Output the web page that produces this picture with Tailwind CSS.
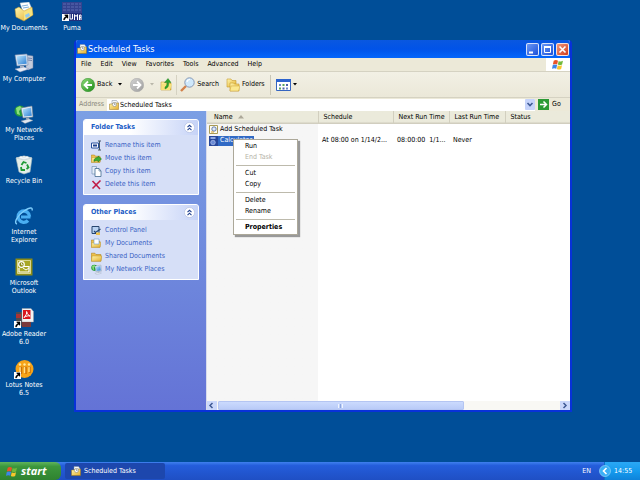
<!DOCTYPE html>
<html lang="en">

<head>
    <title>Scheduled Tasks</title>
    <meta charset="utf-8">
    <meta name="viewport" content="width=device-width, initial-scale=1.0">
    <script src="https://cdn.jsdelivr.net/npm/@tailwindcss/browser@4"></script>
</head>

<body class="h-screen flex flex-col overflow-hidden bg-[#004e98] font-['DejaVu_Sans_Condensed','DejaVu_Sans',sans-serif] text-[7px] leading-[9px] text-black">

    <!-- shared icons -->
    <svg class="absolute size-0">
        <defs>
            <linearGradient id="green" x1="0" y1="0" x2="1" y2="1">
                <stop offset="0" stop-color="#8fdc78"/><stop offset="1" stop-color="#1b8a17"/>
            </linearGradient>
            <linearGradient id="grey" x1="0" y1="0" x2="1" y2="1">
                <stop offset="0" stop-color="#d4d4d4"/><stop offset="1" stop-color="#9c9c9c"/>
            </linearGradient>
            <linearGradient id="screen" x1="0" y1="0" x2="1" y2="1">
                <stop offset="0" stop-color="#bfe8ff"/><stop offset="1" stop-color="#2b7fd4"/>
            </linearGradient>
            <linearGradient id="yellow" x1="0" y1="0" x2="1" y2="1">
                <stop offset="0" stop-color="#fff6b0"/><stop offset="1" stop-color="#e3ae2c"/>
            </linearGradient>
            <symbol id="tasks" viewBox="0 0 10 10">
                <path d="M3 .5h4.500l1.500 2v4H3z" fill="#f4f7fb" stroke="#7b8794" stroke-width=".5"/>
                <path d="M.5 4h2.500l1-1h5.500v6.500H.5z" fill="url(#yellow)" stroke="#9a741a" stroke-width=".5"/>
                <circle cx="5.500" cy="4.500" r="2" fill="#fff" stroke="#777" stroke-width=".5"/>
                <path d="M5.500 3.200v1.300h1" fill="none" stroke="#345" stroke-width=".5"/>
            </symbol>
            <symbol id="folder" viewBox="0 0 10 10">
                <path d="M.3 2h3.200l1 1.200H9v6H.3z" fill="#eec14c" stroke="#a97b15" stroke-width=".5"/>
                <path d="M1 4.500h8.800L9 9.300H.3z" fill="url(#yellow)" stroke="#b98c20" stroke-width=".4"/>
            </symbol>
            <symbol id="network" viewBox="0 0 20 20">
                <circle cx="6" cy="7" r="5.500" fill="#249b3c"/>
                <path d="M2 4l4-2 2 2-3 3 1 4-3-1z" fill="#8be07a"/>
                <path d="M7 4l11-2 1 11-10 1z" fill="#e6edf5" stroke="#66788c" stroke-width=".6"/>
                <path d="M8.500 5.200L17 3.500l.8 8.300-7.800.8z" fill="url(#screen)"/>
                <path d="M12 14l3-.4.500 2.400-3 .5z" fill="#9babbd"/>
                <path d="M7 17l8-2 4 1.500-8 3z" fill="#dfe7ef" stroke="#7b8da0" stroke-width=".4"/>
            </symbol>
            <symbol id="flag" viewBox="0 0 14 12">
                <path d="M2 1.500C4 .3 5.500.6 7 1.500L6 6C4.500 5.200 3 5.100 1 6z" fill="#ea5427"/>
                <path d="M7.800 1.800c1.700.9 3.200.8 5-.1l-1 4.400c-1.800.9-3.400.9-5 0z" fill="#72b93b"/>
                <path d="M.9 6.700c1.900-.9 3.500-.8 5 0L5 11C3.500 10.200 2 10.100 0 11z" fill="#3d86e8"/>
                <path d="M6.700 7c1.600.9 3.100.9 5 0l-1 4.300c-1.800.8-3.400.8-5 0z" fill="#f9c62c"/>
            </symbol>
            <symbol id="shortcut" viewBox="0 0 7 7">
                <path d="M0 0h7v7H0z" fill="#fff"/>
                <path d="M1.500 6C1.500 4 2.500 3 4 2.800L2.700 1.300V.8H6v3.400h-.6L4.600 3.400C4 3.700 3 4.300 2.600 6z" stroke="#000" stroke-width=".3"/>
            </symbol>
            <symbol id="chevrons" viewBox="0 0 10 10">
                <circle cx="5" cy="5" r="4.600" fill="#fff" stroke="#b3bfe0" stroke-width=".6"/>
                <path d="M3.200 4.700L5 3l1.800 1.700M3.200 7.300L5 5.600l1.800 1.700" fill="none" stroke="#1e3f8f" stroke-width="1"/>
            </symbol>
        </defs>
    </svg>

    <main class="relative flex-1 min-h-0">

        <!-- desktop icons -->
        <nav class="flex text-center text-white leading-[8px]">
            <div class="w-12">
                <a href="#" class="flex flex-col items-center h-[51px] pt-[2px] gap-[2px]">
                    <svg class="size-5 shrink-0" viewBox="0 0 20 20">
                        <path d="M6 1l9-1 3 7-8 6z" fill="#fff" stroke="#9db4c9" stroke-width=".5"/>
                        <path d="M8 4l6-1M9 6l6-1" stroke="#7fb0dd"/>
                        <path d="M1 7l4-2 5 4 8-4 1 8-9 6-8-4z" fill="url(#yellow)" stroke="#c69a2c" stroke-width=".5"/>
                        <path d="M10 10l8-4 .5 7L10 18z" fill="#f8e37f"/>
                        <path d="M11 13l4-2 1 3-4 2z" fill="#8ec9f2"/>
                    </svg>
                    <span class="whitespace-nowrap">My Documents</span>
                </a>
                <a href="#" class="flex flex-col items-center h-[51px] pt-[2px] gap-[2px]">
                    <svg class="size-5 shrink-0" viewBox="0 0 20 20">
                        <path d="M12 2l7 1v12l-5 2-2-2z" fill="#c3cbdc" stroke="#6e7d9c" stroke-width=".5"/>
                        <path d="M14 5l4 .5M14 7l4 .5" stroke="#7384ab"/>
                        <path d="M1 2l12-1 1 11-11 1z" fill="#dfe8f6" stroke="#7186a6" stroke-width=".6"/>
                        <path d="M2.500 3.300l9.500-.8.700 8.300-8.700.8z" fill="url(#screen)"/>
                        <path d="M6 13h4v2H6z" fill="#a7b3c8"/>
                        <path d="M1 16l9-2 5 2-9 3z" fill="#e8edf7" stroke="#8493b5" stroke-width=".5"/>
                    </svg>
                    <span class="whitespace-nowrap">My Computer</span>
                </a>
                <a href="#" class="flex flex-col items-center h-[51px] pt-[2px] gap-[2px]">
                    <svg class="size-5 shrink-0"><use href="#network"/></svg>
                    <span>My Network<br>Places</span>
                </a>
                <a href="#" class="flex flex-col items-center h-[51px] pt-[2px] gap-[2px]">
                    <svg class="size-5 shrink-0" viewBox="0 0 20 20">
                        <path d="M2 3l8-2 8 2-2 14-6 2-5-2z" fill="#e4eee9" stroke="#a8bcc0" stroke-width=".6"/>
                        <path d="M2 3l8 2 8-2-8-2z" fill="#fff" stroke="#b3c4ca" stroke-width=".5"/>
                        <path d="M4 3l3-2 3 2 3-2 3 2-6 1.500z" fill="#f5fafd" stroke="#9aa" stroke-width=".3"/>
                        <path d="M7.500 10l2-3 3 1M13 9.500l1.500 3-2 1.500M11 15H7.500l-.5-3" fill="none" stroke="#1f9a35" stroke-width="1.800"/>
                    </svg>
                    <span class="whitespace-nowrap">Recycle Bin</span>
                </a>
                <a href="#" class="flex flex-col items-center h-[51px] pt-[2px] gap-[2px]">
                    <svg class="size-5 shrink-0" viewBox="0 0 20 20">
                        <path d="M16.500 11H7" stroke="#49aef2" stroke-width="3"/>
                        <path d="M15.500 10.500a5.700 5.700 0 1 0-1.500 4" fill="none" stroke="#49aef2" stroke-width="3.400"/>
                        <path d="M3 18C-1 17 4 9 10 5s9-4 8-.5" fill="none" stroke="#7fcdfb" stroke-width="1.400"/>
                    </svg>
                    <span>Internet<br>Explorer</span>
                </a>
                <a href="#" class="flex flex-col items-center h-[51px] pt-[2px] gap-[2px]">
                    <svg class="size-5 shrink-0" viewBox="0 0 20 20">
                        <path d="M1.500 1.500h17v17h-17z" fill="#8d8c16"/>
                        <path d="M3.500 3.500h13v13h-13z" fill="#a9a726" stroke="#e9e7b0" stroke-width=".8"/>
                        <path d="M8 9.500h7v5.500H5v-4" fill="#a9a726" stroke="#fff" stroke-width="1.200"/>
                        <path d="M9 11l3 2 3-2" fill="none" stroke="#fff"/>
                        <circle cx="7.500" cy="7.500" r="2.800" fill="#8d8c16" stroke="#fff" stroke-width="1.200"/>
                        <path d="M7.500 5.800v2h1.500" fill="none" stroke="#fff" stroke-width=".8"/>
                    </svg>
                    <span>Microsoft<br>Outlook</span>
                </a>
                <a href="#" class="flex flex-col items-center h-[51px] pt-[2px] gap-[2px]">
                    <svg class="size-5 shrink-0" viewBox="0 0 20 20">
                        <path d="M2 4h7v14H2z" fill="#4b4b52"/>
                        <path d="M2 6h5v4H2z" fill="#a33"/>
                        <path d="M8 .5h9l2.500 3V14H8z" fill="#f2f2f2" stroke="#999" stroke-width=".4"/>
                        <path d="M9 2h7.500v9H9z" fill="#d9141c"/>
                        <path d="M10 9.500c2-2 3-4 2.600-6 1 3 2 4 3.500 4.500-2-.5-4 0-6 1.500z" fill="none" stroke="#fff" stroke-width="1"/>
                        <path d="M8 14h9v5H8z" fill="#7a3a3c"/>
                        <use href="#shortcut" x="0" y="13" width="7" height="7"/>
                    </svg>
                    <span class="whitespace-nowrap">Adobe Reader<br>6.0</span>
                </a>
                <a href="#" class="flex flex-col items-center h-[51px] pt-[2px] gap-[2px]">
                    <svg class="size-5 shrink-0" viewBox="0 0 20 20">
                        <circle cx="10.500" cy="10" r="9" fill="#f6a318"/>
                        <path d="M5 8.500h2.500v6.500M9.500 8.500h2.500v6.500M14 8.500h2V14" fill="none" stroke="#c96e08" stroke-width="1.400"/>
                        <path d="M6 8v6M10.500 8v6M15 8v5" stroke="#ffe08a" stroke-width="1.400"/>
                        <circle cx="6" cy="5.500" r="1.200" fill="#ffe9a0"/><circle cx="10.500" cy="5.500" r="1.200" fill="#ffe9a0"/><circle cx="15" cy="5.500" r="1.200" fill="#ffe9a0"/>
                        <use href="#shortcut" x="0" y="13" width="7" height="7"/>
                    </svg>
                    <span>Lotus Notes<br>6.5</span>
                </a>
            </div>
            <div class="w-12">
                <a href="#" class="flex flex-col items-center h-[51px] pt-[2px] gap-[2px]">
                    <svg class="size-5 shrink-0" viewBox="0 0 20 20">
                        <path d="M0 0h20v11H0z" fill="#34438f"/>
                        <path d="M1 2h18M1 5h18M1 8h18" stroke="#5c6cb2" stroke-width="1" stroke-dasharray="3 1"/>
                        <path d="M0 11h20v8H0z" fill="#22307c"/>
                        <path d="M8 12v5h2.500v-5M12.500 18v-5.500l1.500 2 1.500-2V18M17.500 18v-5h1.500v5M17.500 15.500H19" fill="none" stroke="#fff" stroke-width="1"/>
                        <use href="#shortcut" x="0" y="12" width="7" height="7"/>
                    </svg>
                    <span>Puma</span>
                </a>
            </div>
        </nav>

        <!-- explorer window -->
        <section class="absolute left-[74px] right-[68px] top-10 bottom-[50px] flex flex-col rounded-t-[4px] overflow-hidden border-x-2 border-b-2 border-[#0831d9] bg-[#ece9d8]">
            <header class="flex items-center h-[18px] shrink-0 px-px gap-px bg-linear-to-b from-[#0a58e0] via-[#0153e8] to-[#0466fb] text-white">
                <svg class="size-[10px]"><use href="#tasks"/></svg>
                <h1 class="flex-1 text-[9px] leading-[12px]">Scheduled Tasks</h1>
                <div class="flex gap-[2px]">
                    <button aria-label="Minimize" class="size-[13px] rounded-[2px] border border-white/80 bg-linear-to-br from-[#6a97f5] to-[#1d4fd8]">
                        <svg viewBox="0 0 11 11"><path d="M2 8.500h4" stroke="#fff" stroke-width="2"/></svg>
                    </button>
                    <button aria-label="Maximize" class="size-[13px] rounded-[2px] border border-white/80 bg-linear-to-br from-[#6a97f5] to-[#1d4fd8]">
                        <svg viewBox="0 0 11 11"><path d="M2.500 3v5.500h6V3" fill="none" stroke="#fff" stroke-width="1"/><path d="M2 3h7" stroke="#fff" stroke-width="2"/></svg>
                    </button>
                    <button aria-label="Close" class="size-[13px] rounded-[2px] border border-white/80 bg-linear-to-br from-[#f0957a] to-[#cf3a14]">
                        <svg viewBox="0 0 11 11"><path d="M2.500 2.500l6 6M8.500 2.500l-6 6" stroke="#fff" stroke-width="1.600"/></svg>
                    </button>
                </div>
            </header>

            <div class="flex h-[14px] shrink-0 border-b border-[#d5d2c2]">
                <div class="flex flex-1 items-center gap-[9px] pl-[5px]">
                    <button>File</button>
                    <button>Edit</button>
                    <button>View</button>
                    <button>Favorites</button>
                    <button>Tools</button>
                    <button>Advanced</button>
                    <button>Help</button>
                </div>
                <div class="flex w-6 items-center justify-center bg-white">
                    <svg class="w-3 h-[11px]"><use href="#flag"/></svg>
                </div>
            </div>

            <div class="flex items-center h-[26px] shrink-0 pl-[5px] border-b border-[#d5d2c2] bg-linear-to-b from-[#f2f0e5] to-[#ebe8d8]">
                <button class="flex items-center gap-[2px]">
                    <svg class="size-[14px]" viewBox="0 0 14 14"><circle cx="7" cy="7" r="6.700" fill="url(#green)" stroke="#2c8a28" stroke-width=".5"/><path d="M11 7H4M7 3.500L3.500 7 7 10.500" fill="none" stroke="#fff" stroke-width="1.800"/></svg>
                    Back
                </button>
                <button aria-label="Back history" class="w-4"><svg class="mx-auto w-1 h-[3px]" viewBox="0 0 4 3"><path d="M0 0h4L2 2.500z"/></svg></button>
                <button aria-label="Forward" class="ml-[2px]">
                    <svg class="size-[14px]" viewBox="0 0 14 14"><circle cx="7" cy="7" r="6.700" fill="url(#grey)" stroke="#a5a5a5" stroke-width=".5"/><path d="M3 7h7M7 3.500L10.500 7 7 10.500" fill="none" stroke="#fff" stroke-width="1.800"/></svg>
                </button>
                <button aria-label="Forward history" class="w-4"><svg class="mx-auto w-1 h-[3px]" viewBox="0 0 4 3"><path d="M0 0h4L2 2.500z" fill="#b9b7aa"/></svg></button>
                <button aria-label="Up">
                    <svg class="size-[13px]" viewBox="0 0 13 13"><path d="M1 4h4l1 1h5v7H1z" fill="url(#yellow)" stroke="#b98c20" stroke-width=".5"/><path d="M2 6h10l-2 6H1z" fill="#f6e27c"/><path d="M5 11c3-1 4-3 3.500-6.500H11L8 .5 4.500 4.500H7C7 7 6.500 8 5 9z" fill="#2fa52c" stroke="#17761a" stroke-width=".4"/></svg>
                </button>
                <span class="h-5 w-px mx-[3px] bg-[#d5d2c2]"></span>
                <button class="flex items-center gap-[2px]">
                    <svg class="size-[15px]" viewBox="0 0 15 15"><path d="M1 14l5-5" stroke="#d2814b" stroke-width="2.400"/><circle cx="9.500" cy="5.500" r="4.700" fill="#cfe8fb" stroke="#8698b5" stroke-width="1"/><path d="M7 5a3 3 0 0 1 3-2.500" fill="none" stroke="#fff" stroke-width="1.200"/></svg>
                    Search
                </button>
                <button class="flex items-center gap-[2px] ml-[7px]">
                    <svg class="size-[14px]" viewBox="0 0 14 14"><path d="M1 1h4l1 1.500h4V9H1z" fill="url(#yellow)" stroke="#c89b2e" stroke-width=".6"/><path d="M4 5h3.500l1 1H13v7H4z" fill="url(#yellow)" stroke="#c89b2e" stroke-width=".6"/><path d="M5 8h9l-1.500 5H4z" fill="#fbe88e" stroke="#c89b2e" stroke-width=".4"/></svg>
                    Folders
                </button>
                <span class="h-5 w-px mx-[5px] bg-[#c9c6b6]"></span>
                <button aria-label="Views" class="flex items-center gap-[2px]">
                    <svg class="w-[15px] h-3" viewBox="0 0 15 12"><path d="M.5.5h14v11H.5z" fill="#fff" stroke="#3565c0"/><path d="M0 0h15v3H0z" fill="#2c63cd"/><path d="M3 5h2v2H3zM10 8.500h2v2h-2z" fill="#6f8ac7"/><path d="M6.500 5h2v2h-2zM3 8.500h2v2H3z" fill="#56a55a"/><path d="M10 5h2v2h-2zM6.500 8.500h2v2h-2z" fill="#4b62a8"/></svg>
                    <svg class="w-1 h-[3px]" viewBox="0 0 4 3"><path d="M0 0h4L2 2.500z"/></svg>
                </button>
            </div>

            <form class="flex items-center h-[13px] shrink-0 pl-[3px] gap-[3px]">
                <label for="address" class="w-[25px] text-[#8a887b]">Address</label>
                <div class="flex flex-1 items-center h-3 pl-[2px] gap-px bg-white">
                    <svg class="size-[10px]"><use href="#tasks"/></svg>
                    <input id="address" type="text" value="Scheduled Tasks" class="flex-1 min-w-0 h-3 outline-none">
                    <button type="button" aria-label="Show addresses" class="w-[10px] h-[11px] rounded-[1px] bg-[#c6d4fb]">
                        <svg viewBox="0 0 10 11"><path d="M2.500 4L5 6.500 7.500 4" fill="none" stroke="#3f5a95" stroke-width="1.600"/></svg>
                    </button>
                </div>
                <button type="button" class="flex items-center w-8 gap-[3px]">
                    <svg class="size-[11px]" viewBox="0 0 11 11"><path d="M0 0h11v11H0z" fill="#2c9a35"/><path d="M2 5.500h6M5.500 2.500l3 3-3 3" fill="none" stroke="#fff" stroke-width="1.500"/></svg>
                    Go
                </button>
            </form>

            <div class="flex flex-1 min-h-0">
                <aside class="w-[130px] shrink-0 px-[7px] pt-2 flex flex-col gap-[9px] bg-linear-to-b from-[#7b9fe4] to-[#6473d6] text-[#3a5fc4]">
                    <section class="rounded-t-[3px] border border-white bg-[#d6dff7] overflow-hidden">
                        <div class="flex items-center justify-between h-[15px] pl-[7px] pr-[3px] bg-linear-to-r from-white from-40% to-[#c6d3f7]">
                            <h2 class="font-bold text-[#215dc6]">Folder Tasks</h2>
                            <button aria-label="Collapse Folder Tasks"><svg class="size-[11px]"><use href="#chevrons"/></svg></button>
                        </div>
                        <ul class="pl-[7px] pt-[5px] pb-[2px]">
                            <li class="h-[13px]"><a href="#" class="flex items-center gap-[3px]">
                                <svg class="size-[11px]" viewBox="0 0 11 11"><path d="M.5 3h7v5h-7z" fill="#fff" stroke="#29509c"/><path d="M2 4.500h4v2H2z" fill="#1d3f8e"/><path d="M7 1h3M7 10h3M8.500 1v9" stroke="#456" stroke-width="1"/></svg>
                                Rename this item</a></li>
                            <li class="h-[13px]"><a href="#" class="flex items-center gap-[3px]">
                                <svg class="size-[11px]" viewBox="0 0 11 11"><use href="#folder" width="10" height="10"/><path d="M3 7c1-2 2-2.500 4-2.500V3l3.500 3L7 9V7.500c-1.500 0-3 0-4 1z" fill="#3cad36" stroke="#177419" stroke-width=".5"/></svg>
                                Move this item</a></li>
                            <li class="h-[13px]"><a href="#" class="flex items-center gap-[3px]">
                                <svg class="size-[11px]" viewBox="0 0 11 11"><path d="M1 .5h4.500V8H1z" fill="#e4edf8" stroke="#7592b5" stroke-width=".7"/><path d="M4 2.500h4L10 5v5.500H4z" fill="#fff" stroke="#42698f" stroke-width=".8"/><path d="M8 2.500V5h2" fill="none" stroke="#42698f" stroke-width=".6"/></svg>
                                Copy this item</a></li>
                            <li class="h-[13px]"><a href="#" class="flex items-center gap-[3px]">
                                <svg class="size-[11px]" viewBox="0 0 11 11"><path d="M1.500 2l7.500 8M9.500 1.500L1.500 9.500" fill="none" stroke="#c01c47" stroke-width="1.600"/></svg>
                                Delete this item</a></li>
                        </ul>
                    </section>
                    <section class="rounded-t-[3px] border border-white bg-[#d6dff7] overflow-hidden">
                        <div class="flex items-center justify-between h-[15px] pl-[7px] pr-[3px] bg-linear-to-r from-white from-40% to-[#c6d3f7]">
                            <h2 class="font-bold text-[#215dc6]">Other Places</h2>
                            <button aria-label="Collapse Other Places"><svg class="size-[11px]"><use href="#chevrons"/></svg></button>
                        </div>
                        <ul class="pl-[7px] pt-[5px] pb-[2px]">
                            <li class="h-[13px]"><a href="#" class="flex items-center gap-[3px]">
                                <svg class="size-[11px]" viewBox="0 0 11 11"><path d="M1 1.500h7v7H1z" fill="#b9d2f2" stroke="#27466f" stroke-width="1"/><path d="M3 6l1.500 1.500L9.500 4" fill="none" stroke="#27466f" stroke-width="1.200"/><path d="M5 7.500h4v2.500H5z" fill="#eec14c"/></svg>
                                Control Panel</a></li>
                            <li class="h-[13px]"><a href="#" class="flex items-center gap-[3px]">
                                <svg class="size-[11px]" viewBox="0 0 11 11"><use href="#folder" width="10" height="10"/><path d="M3 1h5v5H3z" fill="#fff" stroke="#6d9ad0" stroke-width=".6"/></svg>
                                My Documents</a></li>
                            <li class="h-[13px]"><a href="#" class="flex items-center gap-[3px]">
                                <svg class="size-[11px]"><use href="#folder"/></svg>
                                Shared Documents</a></li>
                            <li class="h-[13px]"><a href="#" class="flex items-center gap-[3px]">
                                <svg class="size-[11px]"><use href="#network"/></svg>
                                My Network Places</a></li>
                        </ul>
                    </section>
                </aside>

                <div class="relative flex flex-1 min-w-0 flex-col border-l border-[#d8dcec] bg-white">
                    <div class="flex-1 min-h-0 bg-linear-to-r from-[#f6f6f6] from-[111px] to-white to-[111px]">
                        <table class="w-full table-fixed text-left whitespace-nowrap">
                            <colgroup>
                                <col class="w-[111px]"><col class="w-[75px]"><col class="w-14"><col class="w-14"><col>
                            </colgroup>
                            <thead class="bg-linear-to-b from-[#ebeadb] from-80% to-[#cbc7b8]">
                                <tr class="h-[13px]">
                                    <th class="font-normal pl-[7px] border-r border-[#d2cfbf]">Name <svg class="inline ml-[3px] w-[6px] h-1" viewBox="0 0 6 4"><path d="M3 0l3 3.500H0z" fill="#aca899"/></svg></th>
                                    <th class="font-normal pl-[5px] border-r border-[#d2cfbf]">Schedule</th>
                                    <th class="font-normal pl-[5px] border-r border-[#d2cfbf]">Next Run Time</th>
                                    <th class="font-normal pl-[5px] border-r border-[#d2cfbf]">Last Run Time</th>
                                    <th class="font-normal pl-[5px]">Status</th>
                                </tr>
                            </thead>
                            <tbody>
                                <tr class="h-[11px]">
                                    <td class="pl-[2px]">
                                        <div class="flex items-center gap-[2px]">
                                            <svg class="size-[9px]" viewBox="0 0 9 9"><path d="M.5.5h8v8h-8z" fill="#fffdf0" stroke="#a99b55"/><circle cx="5" cy="4" r="2.200" fill="#dfe9f8" stroke="#456098" stroke-width=".8"/><path d="M2 7h3" stroke="#d59d2c"/></svg>
                                            Add Scheduled Task
                                        </div>
                                    </td>
                                    <td></td><td></td><td></td><td></td>
                                </tr>
                                <tr class="h-[11px]">
                                    <td class="pl-[2px]">
                                        <div class="flex items-center">
                                            <svg class="w-[9px] h-[10px]" viewBox="0 0 9 10"><path d="M0 0h9v10H0z" fill="#27479b"/><path d="M1.500 1h5v2h-5z" fill="#8fa7df"/><circle cx="4" cy="6.500" r="2.300" fill="#6b8bd6" stroke="#c4d2f5" stroke-width=".6"/></svg>
                                            <span class="w-[36px] h-[10px] pl-[2px] bg-[#316ac5] text-white">Calculator</span>
                                        </div>
                                    </td>
                                    <td class="pl-1">At 08:00 on 1/14/2...</td>
                                    <td class="pl-1">08:00:00&nbsp; 1/1...</td>
                                    <td class="pl-1">Never</td>
                                    <td></td>
                                </tr>
                            </tbody>
                        </table>
                    </div>

                    <!-- horizontal scrollbar -->
                    <div class="flex h-[9px] shrink-0 bg-[#f9f8f4]">
                        <button aria-label="Scroll left" class="w-[10px] bg-[#cbd8fb]"><svg class="size-[9px]" viewBox="0 0 9 9"><path d="M5.500 2L3 4.500 5.500 7" fill="none" stroke="#3f5a95" stroke-width="1.500"/></svg></button>
                        <div class="flex-1 px-px">
                            <div class="flex w-[72%] h-[9px] items-center justify-center gap-px rounded-[1px] border border-[#b4c5f2] bg-linear-to-b from-[#cbdafd] to-[#b9cbf8]">
                                <span class="w-px h-1 bg-[#eef4fe]"></span>
                                <span class="w-px h-1 bg-[#8ca6e0]"></span>
                                <span class="w-px h-1 bg-[#eef4fe]"></span>
                            </div>
                        </div>
                        <button aria-label="Scroll right" class="w-[10px] bg-[#cbd8fb]"><svg class="size-[9px]" viewBox="0 0 9 9"><path d="M3.500 2L6 4.500 3.500 7" fill="none" stroke="#3f5a95" stroke-width="1.500"/></svg></button>
                    </div>

                    <!-- context menu -->
                    <div role="menu" class="absolute left-[26px] top-7 w-[65px] p-px flex flex-col border border-[#aca899] bg-white shadow-[2px_2px_1px_#00000060]">
                        <button role="menuitem" class="h-[11px] pl-[10px] text-left">Run</button>
                        <button role="menuitem" class="h-[11px] pl-[10px] text-left text-[#b5b3a8]" disabled>End Task</button>
                        <hr class="my-[2px] mx-px border-[#bdbaac]">
                        <button role="menuitem" class="h-[11px] pl-[10px] text-left">Cut</button>
                        <button role="menuitem" class="h-[11px] pl-[10px] text-left">Copy</button>
                        <hr class="my-[2px] mx-px border-[#bdbaac]">
                        <button role="menuitem" class="h-[11px] pl-[10px] text-left">Delete</button>
                        <button role="menuitem" class="h-[11px] pl-[10px] text-left">Rename</button>
                        <hr class="my-[2px] mx-px border-[#bdbaac]">
                        <button role="menuitem" class="h-[11px] pl-[10px] text-left font-bold">Properties</button>
                    </div>
                </div>
            </div>
        </section>
    </main>

    <!-- taskbar -->
    <footer class="flex h-[18px] shrink-0 text-white bg-linear-to-b from-[#3f80ee] via-[#245ddb] via-20% to-[#1f4fc4]">
        <button class="flex items-center w-[61px] pl-[6px] gap-[3px] rounded-r-[6px] bg-linear-to-b from-[#5fb45c] via-[#3c973c] via-25% to-[#2f8230] font-['Open_Sans',sans-serif] text-[11px] leading-[14px] font-bold italic">
            <svg class="w-3 h-[11px]"><use href="#flag"/></svg>
            start
        </button>
        <div class="flex flex-1 py-px pl-1">
            <button class="flex items-center w-[100px] pl-[6px] gap-[3px] rounded-[2px] bg-[#1d47ad]">
                <svg class="size-[10px]"><use href="#tasks"/></svg>
                Scheduled Tasks
            </button>
        </div>
        <button class="pl-2 pr-[13px]">EN</button>
        <div class="relative flex items-center w-9 pl-[9px] border-l border-[#0f6fc6] bg-linear-to-b from-[#2aa8f5] via-[#159bee] to-[#0f83da]">
            <button aria-label="Show hidden icons" class="absolute -left-[6px] top-[3px]">
                <svg class="size-3" viewBox="0 0 12 12"><circle cx="6" cy="6" r="5.500" fill="#3bb0f6" stroke="#8fd2fb" stroke-width=".7"/><path d="M7.500 3L4.500 6l3 3" fill="none" stroke="#fff" stroke-width="1.600"/></svg>
            </button>
            <time>14:55</time>
        </div>
    </footer>
</body>

</html>
